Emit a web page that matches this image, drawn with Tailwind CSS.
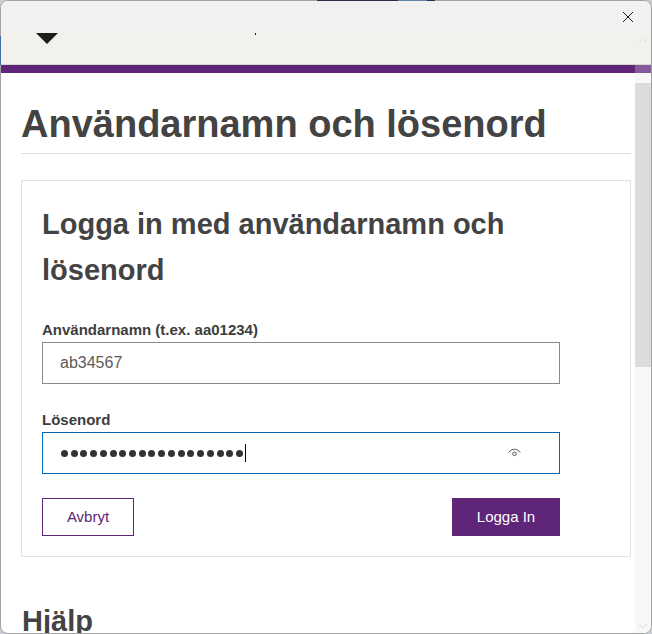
<!DOCTYPE html>
<html lang="sv">
<head>
  <meta charset="UTF-8" />
  <title>Användarnamn och lösenord</title>
  <script src="https://cdn.jsdelivr.net/npm/@tailwindcss/browser@4"></script>
</head>
<body class="relative h-[634px] w-[652px] overflow-hidden bg-[#c9ccd1] font-['Liberation_Sans',Arial,sans-serif]">
  <div class="flex h-[634px] w-[652px] flex-col overflow-hidden rounded-[8px] border border-[#a3a3a3] bg-white">
    <!-- Title bar -->
    <div class="flex h-[32px] shrink-0 items-start justify-end bg-[#f1f1f1] pt-[11px] pr-[18px]">
      <svg class="h-[10px] w-[10px]" viewBox="0 0 10 10" fill="none" stroke="#1a1a1a" stroke-width="1"><path d="M0 0 10 10M10 0 0 10" /></svg>
    </div>
    <div class="flex min-h-0 flex-1">
      <!-- Page -->
      <div class="min-w-0 flex-1 overflow-hidden">
        <div class="flex h-[31px] items-start bg-[#f3f1ec] pl-[35px]">
          <div class="h-0 w-0 border-x-[11px] border-t-[11px] border-x-transparent border-t-[#1c1c1a]"></div>
          <div class="ml-[197px] h-[2px] w-[1px] bg-[#1c1c1a]"></div>
        </div>
        <div class="h-[9px] border-t border-[#d9d7d2] bg-[#5f2578]"></div>
        <main class="pt-[28px] pr-[4px] pl-[20px]">
          <h1 class="border-b border-[#e0e0dc] pb-[6px] text-[38px] leading-[46px] font-bold text-[#434343]">Användarnamn och lösenord</h1>
          <section class="mt-[26px] border border-[#e3e2dc] px-[20px] pt-[20px] pb-[20px]">
            <h2 class="text-[29px] leading-[46px] font-bold text-[#434343]">Logga in med användarnamn och lösenord</h2>
            <label class="mt-[27px] block text-[15px] leading-[20px] font-bold text-[#3d3d3d]">Användarnamn (t.ex. aa01234)</label>
            <div class="mt-[2px] flex h-[42px] w-[518px] items-center border border-[#8a8a8a] pl-[17px] text-[16px] text-[#5c5c5c]">ab34567</div>
            <label class="mt-[26px] block text-[15px] leading-[20px] font-bold text-[#3d3d3d]">Lösenord</label>
            <div class="mt-[2px] flex h-[42px] w-[518px] items-center border border-[#0067b8] pl-[18px] pr-[38px]">
              <div class="flex gap-[2.72px]">
                <span class="h-[7px] w-[7px] rounded-full bg-[#333]"></span><span class="h-[7px] w-[7px] rounded-full bg-[#333]"></span><span class="h-[7px] w-[7px] rounded-full bg-[#333]"></span><span class="h-[7px] w-[7px] rounded-full bg-[#333]"></span><span class="h-[7px] w-[7px] rounded-full bg-[#333]"></span><span class="h-[7px] w-[7px] rounded-full bg-[#333]"></span><span class="h-[7px] w-[7px] rounded-full bg-[#333]"></span><span class="h-[7px] w-[7px] rounded-full bg-[#333]"></span><span class="h-[7px] w-[7px] rounded-full bg-[#333]"></span><span class="h-[7px] w-[7px] rounded-full bg-[#333]"></span><span class="h-[7px] w-[7px] rounded-full bg-[#333]"></span><span class="h-[7px] w-[7px] rounded-full bg-[#333]"></span><span class="h-[7px] w-[7px] rounded-full bg-[#333]"></span><span class="h-[7px] w-[7px] rounded-full bg-[#333]"></span><span class="h-[7px] w-[7px] rounded-full bg-[#333]"></span><span class="h-[7px] w-[7px] rounded-full bg-[#333]"></span><span class="h-[7px] w-[7px] rounded-full bg-[#333]"></span><span class="h-[7px] w-[7px] rounded-full bg-[#333]"></span><span class="h-[7px] w-[7px] rounded-full bg-[#333]"></span>
              </div>
              <span class="ml-[2px] h-[18px] w-px bg-black"></span>
              <svg class="mb-[2px] ml-auto h-[9px] w-[13px]" viewBox="0 0 13 9" fill="none" stroke="#555" stroke-width="1"><path d="M0.7 4.5C3.5 0.2 9.5 0.2 12.3 4.5" /><circle cx="6.5" cy="5.8" r="1.8" /></svg>
            </div>
            <div class="mt-[24px] flex w-[518px] items-center justify-between">
              <button class="h-[38px] w-[92px] border border-[#5f2578] text-[15px] text-[#5f2578]">Avbryt</button>
              <button class="h-[38px] w-[108px] bg-[#5f2578] text-[15px] text-white">Logga In</button>
            </div>
          </section>
          <h2 class="mt-[46px] ml-[1px] text-[29px] leading-[36px] font-bold text-[#434343]">Hjälp</h2>
        </main>
      </div>
      <!-- Scrollbar -->
      <div class="flex w-[16px] shrink-0 flex-col bg-[#f8f8f8]">
        <div class="flex h-[31px] flex-col items-center bg-[#f3f1ec]">
          <svg class="mt-[5px] h-[6px] w-[10px]" viewBox="0 0 10 6" fill="none" stroke="#dcdcdc" stroke-width="1"><path d="M1 5 5 1 9 5" /></svg>
        </div>
        <div class="h-[9px] border-t border-[#d9d7d2] bg-[#855a9b]"></div>
        <div class="h-[10px]"></div>
        <div class="h-[284px] bg-[#dcdcdc]"></div>
        <svg class="mt-auto mb-[4px] ml-[3px] h-[6px] w-[10px]" viewBox="0 0 10 6" fill="none" stroke="#dcdcdc" stroke-width="1"><path d="M1 1 5 5 9 1" /></svg>
      </div>
    </div>
  </div>
  <!-- Bits of the desktop showing round the window edge -->
  <div class="absolute top-0 left-[317px] h-px w-[118px] bg-[#2b2c4a]"></div>
  <div class="absolute top-0 left-[398px] h-px w-[29px] bg-[#5d86a6]"></div>
  <div class="absolute top-[36px] left-0 h-[29px] w-px bg-[#3f6ea8]"></div>
</body>
</html>
